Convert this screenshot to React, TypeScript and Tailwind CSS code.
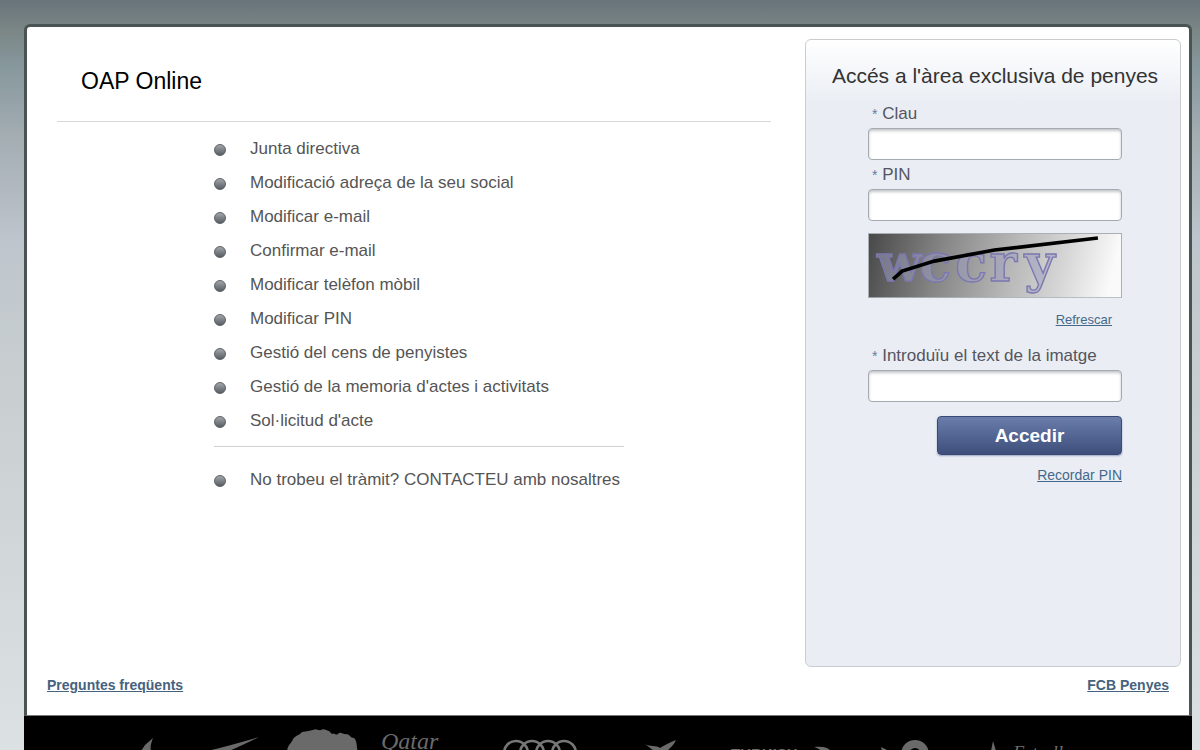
import type { ReactNode } from 'react'

const TRAMITS = [
  'Junta directiva',
  'Modificació adreça de la seu social',
  'Modificar e-mail',
  'Confirmar e-mail',
  'Modificar telèfon mòbil',
  'Modificar PIN',
  'Gestió del cens de penyistes',
  "Gestió de la memoria d'actes i activitats",
  "Sol·licitud d'acte",
]

function BulletItem({ children }: { children: ReactNode }) {
  return (
    <li className="flex items-center gap-6 h-[34px]">
      <span className="w-3 h-3 mt-0.5 rounded-full border border-[#5a6065] bg-linear-to-b from-[#a3a7ab] to-[#585e64] shrink-0" />
      <a href="#" className="text-[#555555] text-[17px] leading-6 no-underline">{children}</a>
    </li>
  )
}

function Field({ id, label, type = 'text' }: { id: string; label: string; type?: string }) {
  return (
    <div className="flex flex-col">
      <label htmlFor={id} className="pl-1 text-[17px] leading-6 text-[#55555f]">
        <span className="text-[#5b7fa3] text-sm">*</span> {label}
      </label>
      <input
        id={id}
        type={type}
        className="h-8 mt-0.5 px-2 rounded border border-[#a3abb0] bg-white shadow-[inset_0_2px_3px_#c3c6c9] outline-none"
      />
    </div>
  )
}

function Captcha() {
  return (
    <svg viewBox="0 0 253 65" className="w-full" role="img" aria-label="Captcha">
      <defs>
        <linearGradient id="captcha-bg" x1="0" y1="0" x2="1" y2="0.06">
          <stop offset="0" stopColor="#484848" />
          <stop offset="0.3" stopColor="#858585" />
          <stop offset="0.6" stopColor="#b9b9b9" />
          <stop offset="0.8" stopColor="#d6d6d6" />
          <stop offset="1" stopColor="#fafafa" />
        </linearGradient>
      </defs>
      <rect x="0.5" y="0.5" width="252" height="64" fill="url(#captcha-bg)" stroke="#a9b0b4" />
      <text
        x="9 51 87 121 156"
        y="48"
        fontFamily="'DejaVu Serif', serif"
        fontWeight="700"
        fontSize="52"
        fill="#9d9dc4"
        fillOpacity="0.5"
        stroke="#7b77b0"
        strokeWidth="1.4"
      >
        wccry
      </text>
      <path d="M25 46 L34 38 L66 28 L126 17 L229 5" fill="none" stroke="#000" strokeWidth="3.6" />
    </svg>
  )
}

function Sponsors() {
  return (
    <svg viewBox="0 0 1168 35" className="block w-full" role="img" aria-label="Sponsors" fill="#6a6a6a">
      <path d="M117 35 L121 29 L129 22 C127 27 126 31 127 35 Z M183 35 C199 31 218 26 235 21 C224 27 214 31 205 35 Z" />
      <path d="M263 35 C264 28 268 27 269 23 C272 19 276 19 278 16 C283 15 286 15 289 14 C292 12 294 15 297 14 C300 12 303 15 305 15 L308 18 C310 16 312 20 314 18 C317 15 319 19 322 18 C326 18 326 22 330 22 C334 26 332 32 334 35 Z" />
      <text x="357" y="33" fontFamily="'Liberation Serif', serif" fontStyle="italic" fontSize="24">Qatar</text>
      <g fill="none" stroke="#777" strokeWidth="2.6">
        <circle cx="492" cy="37" r="12" />
        <circle cx="508" cy="37" r="12" />
        <circle cx="524" cy="37" r="12" />
        <circle cx="540" cy="37" r="12" />
      </g>
      <path d="M621 28 C626 31 632 29 636 32 C641 29 646 26 652 24 C650 29 646 32 643 35 L630 35 Z" />
      <text x="707" y="43" fontFamily="'Liberation Sans', sans-serif" fontWeight="700" fontSize="15">TURKISH</text>
      <path d="M790 31 C798 30 804 31 807 35 L797 35 C796 33 793 32 790 31 Z" />
      <path d="M857 31 L865 35 L858 35 Z" />
      <circle cx="891" cy="38" r="10" fill="none" stroke="#6a6a6a" strokeWidth="8" />
      <path d="M967 35 L969 25 L972 35 Z" />
      <text x="989" y="43" fontFamily="'Liberation Serif', serif" fontStyle="italic" fontSize="19">Estrella</text>
    </svg>
  )
}

export default function App() {
  return (
    <div className="min-h-screen flex flex-col px-6 pt-6 pr-2 bg-[linear-gradient(to_bottom,#69747b_0%,#7b8686_4%,#87989d_9%,#a3adb2_18%,#bec5cc_32%,#c8ced0_50%,#dce2e3_100%)] font-['Liberation_Sans',Arial,sans-serif]">
      <main className="flex flex-col border-[3px] border-b border-[#4b5454] border-b-[#777] rounded-t-md bg-white">
        <div className="flex pt-3 pl-[30px] pr-2">
          <section className="flex-1 pt-2.5 pr-[34px]">
            <h1 className="pl-6 pt-4 pb-6 text-[23px] leading-8 text-black border-b border-[#d5d8d9]">OAP Online</h1>
            <div className="w-[410px] ml-[157px] mt-2.5">
              <ul className="pb-2 border-b border-[#cfd2d4]">
                {TRAMITS.map((t) => (
                  <BulletItem key={t}>{t}</BulletItem>
                ))}
              </ul>
              <ul className="pt-4">
                <BulletItem>No trobeu el tràmit? CONTACTEU amb nosaltres</BulletItem>
              </ul>
            </div>
          </section>

          <aside className="w-[376px] min-h-[628px] pt-5 pl-1 rounded-md border border-[#c9cdd0] bg-linear-to-b from-white to-[#eaeef4] to-10%">
            <h2 className="text-center text-[21px] leading-8 text-[#333333]">Accés a l'àrea exclusiva de penyes</h2>
            <form className="flex flex-col w-[254px] mx-auto pt-2.5" onSubmit={(e) => e.preventDefault()}>
              <div className="flex flex-col gap-[3px]">
                <Field id="clau" label="Clau" />
                <Field id="pin" label="PIN" type="password" />
              </div>
              <div className="pt-3">
                <Captcha />
              </div>
              <a href="#" className="self-end mt-3 mr-2.5 text-[13px] leading-5 text-[#45688a] underline">Refrescar</a>
              <div className="pt-3.5">
                <Field id="text-imatge" label="Introduïu el text de la imatge" />
              </div>
              <button
                type="submit"
                className="self-end w-[185px] h-[39px] mt-3.5 rounded border border-[#3a4a74] bg-linear-to-b from-[#6a7dab] to-[#3f4f7c] shadow-[0_1px_2px_#9aa5c0] text-white text-[19px] font-bold"
              >
                Accedir
              </button>
              <a href="#" className="self-end mt-2.5 text-sm leading-5 text-[#45688a] underline">Recordar PIN</a>
            </form>
          </aside>
        </div>

        <nav className="flex justify-between px-5 pt-2 pb-5 text-sm leading-5 font-bold text-[#45627e]">
          <a href="#" className="underline">Preguntes freqüents</a>
          <a href="#" className="underline">FCB Penyes</a>
        </nav>
      </main>
      <footer className="bg-black grow">
        <Sponsors />
      </footer>
    </div>
  )
}
